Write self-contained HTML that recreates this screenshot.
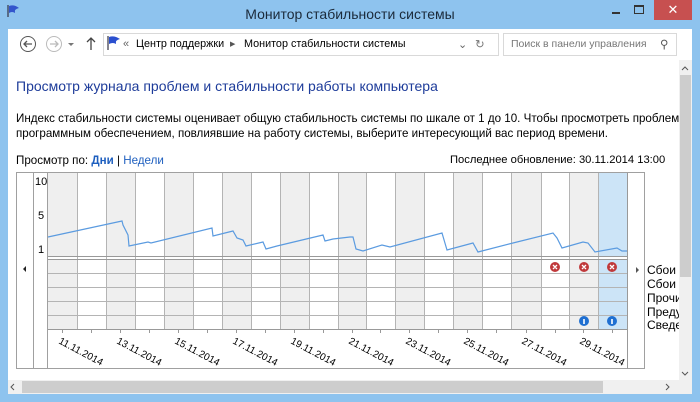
<!DOCTYPE html>
<html><head><meta charset="utf-8"><style>
body{margin:0;width:700px;height:402px;overflow:hidden;background:#8ec3ee;font-family:"Liberation Sans",sans-serif;position:relative}
.abs{position:absolute}
.t{font-size:11.6px;color:#000;white-space:nowrap}
#clip{position:absolute;left:0;top:0;width:679px;height:402px;overflow:hidden}
</style></head><body>
<div class="abs t" style="left:0;width:700px;top:6px;text-align:center;font-size:14px;color:#1b2a3a">Монитор стабильности системы</div>
<svg class="abs" style="left:6px;top:4px" width="14" height="14"><path d="M2 1v12" stroke="#334" stroke-width="1.2"/><path d="M3 2q5-2 10 2q-5 1-4 5q-3-2-6 0z" fill="#3355cc"/></svg>
<div class="abs" style="left:612px;top:12px;width:8px;height:2px;background:#333"></div>
<div class="abs" style="left:634px;top:5px;width:8px;height:6px;border:1px solid #333;border-top-width:2px"></div>
<div class="abs" style="left:654px;top:0;width:38px;height:20px;background:#c75050;color:#fff;text-align:center;font-size:13px;line-height:20px">✕</div>
<div class="abs" style="left:8px;top:29px;width:684px;height:365px;background:#fff"></div>
<svg class="abs" style="left:14px;top:34px" width="90" height="20">
<circle cx="14" cy="10" r="7.5" fill="none" stroke="#555"/><path d="M18 10H10M13 7l-3 3 3 3" fill="none" stroke="#555" stroke-width="1.3"/>
<circle cx="40" cy="10" r="7.5" fill="none" stroke="#bbb"/><path d="M36 10h8M41 7l3 3-3 3" fill="none" stroke="#bbb" stroke-width="1.3"/>
<path d="M54 9l3 3 3-3z" fill="#777"/>
<path d="M77 16V4M73 8l4-4 4 4" fill="none" stroke="#444" stroke-width="1.3"/>
</svg>
<div class="abs" style="left:103px;top:33px;width:394px;height:21px;border:1px solid #d9d9d9"></div>
<svg class="abs" style="left:106px;top:35px" width="16" height="16"><path d="M2 1v14" stroke="#334" stroke-width="1.2"/><path d="M3 2q5-2 11 2q-5 1-4 5q-3-2-7 0z" fill="#2a4fcf"/></svg>
<div class="abs t" style="left:123px;top:38px;color:#666;font-size:11px">«</div>
<div class="abs t" style="left:136px;top:38px;font-size:10.8px">Центр поддержки</div>
<div class="abs t" style="left:230px;top:40px;font-size:7px;color:#555">▶</div>
<div class="abs t" style="left:244px;top:38px;font-size:10.8px">Монитор стабильности системы</div>
<div class="abs t" style="left:458px;top:38px;color:#666;font-size:11px">⌄</div>
<div class="abs t" style="left:475px;top:37px;color:#777">↻</div>
<div class="abs" style="left:503px;top:33px;width:172px;height:21px;border:1px solid #d9d9d9"></div>
<div class="abs t" style="left:511px;top:38px;color:#777;font-size:10.5px">Поиск в панели управления</div>
<div class="abs t" style="left:660px;top:37px;color:#555">⚲</div>
<div id="clip">
<div class="abs" style="left:16px;top:78px;font-size:14px;color:#1e3c9a;white-space:nowrap">Просмотр журнала проблем и стабильности работы компьютера</div>
<div class="abs t" style="left:16px;top:112px">Индекс стабильности системы оценивает общую стабильность системы по шкале от 1 до 10. Чтобы просмотреть проблемы с оборудо</div>
<div class="abs t" style="left:16px;top:127px">программным обеспечением, повлиявшие на работу системы, выберите интересующий вас период времени.</div>
<div class="abs t" style="left:16px;top:154px">Просмотр по: <b style="color:#1e5fbf">Дни</b> | <span style="color:#1e5fbf">Недели</span></div>
<div class="abs t" style="left:450px;top:154px;font-size:11.2px">Последнее обновление: 30.11.2014 13:00</div>
<svg class="abs" style="left:0;top:0" width="700" height="402" font-family="Liberation Sans" font-size="11">
<rect x="16.5" y="172.5" width="628" height="196" fill="#fff" stroke="#a0a0a0"/>
<line x1="33.5" y1="172" x2="33.5" y2="369" stroke="#a0a0a0"/>
<line x1="47.5" y1="172" x2="47.5" y2="369" stroke="#a0a0a0"/>
<g fill="#efefef">
<rect x="48" y="173" width="29" height="83"/><rect x="106" y="173" width="29" height="83"/><rect x="164" y="173" width="29" height="83"/><rect x="222" y="173" width="29" height="83"/><rect x="280" y="173" width="29" height="83"/><rect x="338" y="173" width="29" height="83"/><rect x="395" y="173" width="29" height="83"/><rect x="453" y="173" width="29" height="83"/><rect x="511" y="173" width="30" height="83"/><rect x="569" y="173" width="29" height="83"/>
<rect x="48" y="259" width="29" height="70"/><rect x="106" y="259" width="29" height="70"/><rect x="164" y="259" width="29" height="70"/><rect x="222" y="259" width="29" height="70"/><rect x="280" y="259" width="29" height="70"/><rect x="338" y="259" width="29" height="70"/><rect x="395" y="259" width="29" height="70"/><rect x="453" y="259" width="29" height="70"/><rect x="511" y="259" width="30" height="70"/><rect x="569" y="259" width="29" height="70"/>
</g>
<rect x="598" y="173" width="29" height="83" fill="#cce4f7"/><rect x="598" y="259" width="29" height="70" fill="#cce4f7"/>
<g stroke="#b4b4b4">
<path d="M77.5 173V329M106.5 173V329M135.5 173V329M164.5 173V329M193.5 173V329M222.5 173V329M251.5 173V329M280.5 173V329M309.5 173V329M338.5 173V329M366.5 173V329M395.5 173V329M424.5 173V329M453.5 173V329M482.5 173V329M511.5 173V329M541.5 173V329M569.5 173V329M598.5 173V329"/>
<path d="M48 273.5H627M48 287.5H627M48 301.5H627M48 315.5H627"/>
</g>
<g stroke="#999"><path d="M48 256.5H627M48 259.5H627M48 329.5H627M627.5 173V369"/>
<path d="M62.5 329v4M91.5 329v4M120.5 329v4M149.5 329v4M178.5 329v4M207.5 329v4M236.5 329v4M265.5 329v4M294.5 329v4M323.5 329v4M352.5 329v4M380.5 329v4M409.5 329v4M438.5 329v4M467.5 329v4M496.5 329v4M526.5 329v4M555.5 329v4M583.5 329v4M612.5 329v4"/></g>
<polyline fill="none" stroke="#5b9be0" stroke-width="1.2" points="48,237 122,221 123,225 128,235 129,246 148,242 151,243 212,228 213,236 233,231 237,238 243,240 246,246 263,242 266,249 277,246 323,235 325,241 333,239 350,237 353,237 356,249 363,251 382,245 390,247 442,233 447,250 473,243 478,252 513,243 553,233 557,238 562,248 583,242 588,243 595,252 617,248 622,251 627,251"/>
<text x="35" y="185" font-size="11">10</text><text x="38" y="219">5</text><text x="38" y="253">1</text>
<path d="M26 266v6l-3-3z" fill="#222"/><path d="M636 267v6l3-3z" fill="#555"/>
<g font-size="10">
<text transform="translate(58,343) rotate(28)">11.11.2014</text>
<text transform="translate(116,343) rotate(28)">13.11.2014</text>
<text transform="translate(174,343) rotate(28)">15.11.2014</text>
<text transform="translate(232,343) rotate(28)">17.11.2014</text>
<text transform="translate(290,343) rotate(28)">19.11.2014</text>
<text transform="translate(348,343) rotate(28)">21.11.2014</text>
<text transform="translate(405,343) rotate(28)">23.11.2014</text>
<text transform="translate(463,343) rotate(28)">25.11.2014</text>
<text transform="translate(521,343) rotate(28)">27.11.2014</text>
<text transform="translate(579,343) rotate(28)">29.11.2014</text>
</g>
<g font-size="12"><text x="647" y="274">Сбои п</text><text x="647" y="288">Сбои V</text><text x="647" y="302">Прочи</text><text x="647" y="316">Преду</text><text x="647" y="329">Сведе</text></g>
<circle cx="555" cy="267" r="5" fill="#c0393b"/><circle cx="584" cy="267" r="5" fill="#c0393b"/><circle cx="612" cy="267" r="5" fill="#c0393b"/>
<path d="M553 265l4 4M557 265l-4 4M582 265l4 4M586 265l-4 4M610 265l4 4M614 265l-4 4" stroke="#fff" stroke-width="1.3"/>
<circle cx="584" cy="321" r="5" fill="#1f6fd1"/><circle cx="612" cy="321" r="5" fill="#1f6fd1"/>
<path d="M584 319v5M612 319v5" stroke="#fff" stroke-width="1.6"/>
</svg>
</div>
<svg class="abs" style="left:0;top:0" width="700" height="402" font-family="Liberation Sans">
<rect x="8" y="380" width="671" height="14" fill="#f0f0f0"/>
<rect x="22" y="381" width="581" height="12" fill="#cdcdcd"/>
<path d="M14 384l-3 3 3 3M666 384l3 3-3 3" fill="none" stroke="#555"/>
<rect x="679" y="60" width="13" height="334" fill="#f0f0f0"/>
<rect x="680" y="75" width="11" height="202" fill="#cdcdcd"/>
<path d="M682 70l3-3 3 3M682 372l3 3 3-3" fill="none" stroke="#555"/>
</svg>
</body></html>
